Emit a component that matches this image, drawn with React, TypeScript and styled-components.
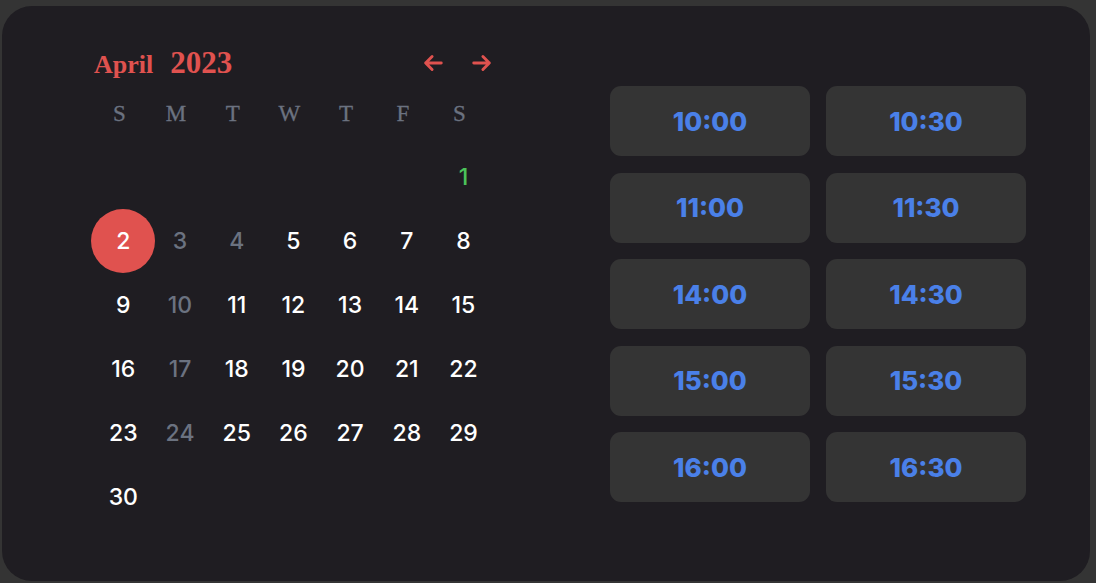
import React from "react";
import styled, { createGlobalStyle } from "styled-components";

const Global = createGlobalStyle`
  html, body { margin: 0; padding: 0; background: #343434; }
  body { padding: 6px 0 0 2px; }
  * { box-sizing: border-box; }
`;

const Card = styled.div`
  width: 1088px;
  height: 575px;
  background: #1f1d22;
  border-radius: 30px;
  display: flex;
  align-items: flex-start;
  padding: 37px 0 0 89px;
`;

const Calendar = styled.section`
  width: 402px;
  display: flex;
  flex-direction: column;
`;

const Header = styled.div`
  height: 40px;
  display: flex;
  align-items: center;
  justify-content: space-between;
`;

const Title = styled.div`
  display: flex;
  align-items: baseline;
  gap: 17px;
  font-family: "Liberation Serif", "Times New Roman", serif;
  font-weight: 700;
  color: #e0524f;
  padding-left: 3px;
`;

const Month = styled.span`
  font-size: 26px;
  font-weight: 700;
`;

const Year = styled.span`
  font-size: 31px;
  font-weight: 700;
`;

const Nav = styled.div`
  display: flex;
  gap: 27px;
  align-items: center;
`;

const NavButton = styled.button`
  background: none;
  border: none;
  padding: 0;
  width: 22px;
  height: 22px;
  display: flex;
  align-items: center;
  justify-content: center;
  color: #e0524f;
  cursor: pointer;
`;

const Weekdays = styled.div`
  margin-top: 11px;
  display: grid;
  grid-template-columns: repeat(7, 56.7px);
  height: 40px;
  align-items: center;
`;

const Weekday = styled.div`
  text-align: center;
  font-family: "Liberation Serif", "Times New Roman", serif;
  font-size: 23px;
  color: #6b7280;
  -webkit-text-stroke: 0.3px #6b7280;
`;

const Days = styled.div`
  margin-top: 11px;
  margin-left: 4px;
  display: grid;
  grid-template-columns: repeat(7, 56.7px);
  grid-auto-rows: 64px;
`;

const DayCell = styled.div`
  display: flex;
  align-items: center;
  justify-content: center;
`;

type Tone = "normal" | "muted" | "today" | "selected";

const toneColor: Record<Tone, string> = {
  normal: "#ffffff",
  muted: "#6b7280",
  today: "#4cc35a",
  selected: "#ffffff",
};

const Day = styled.div<{ $tone: Tone }>`
  flex: 0 0 auto;
  width: 64px;
  height: 64px;
  border-radius: 50%;
  display: flex;
  align-items: center;
  justify-content: center;
  font-family: Inter, "Noto Sans", sans-serif;
  font-size: 23px;
  font-weight: 500;
  color: ${(p) => toneColor[p.$tone]};
  background: ${(p) => (p.$tone === "selected" ? "#e0524f" : "transparent")};
`;

const Times = styled.div`
  margin-left: 117px;
  margin-top: 43px;
  display: grid;
  grid-template-columns: repeat(2, 200px);
  grid-auto-rows: 70px;
  column-gap: 16px;
  row-gap: 16.5px;
`;

const Slot = styled.button`
  border: none;
  border-radius: 11px;
  background: #343434;
  color: #4a80e8;
  font-family: Inter, "Noto Sans", sans-serif;
  font-weight: 800;
  font-size: 26px;
  display: flex;
  align-items: center;
  justify-content: center;
  cursor: pointer;
`;

const ArrowLeft = () => (
  <svg width="22" height="22" viewBox="0 0 24 24" fill="none" stroke="currentColor" strokeWidth="3.2" strokeLinecap="round" strokeLinejoin="round">
    <path d="M11 19l-7-7 7-7M4 12h17" />
  </svg>
);

const ArrowRight = () => (
  <svg width="22" height="22" viewBox="0 0 24 24" fill="none" stroke="currentColor" strokeWidth="3.2" strokeLinecap="round" strokeLinejoin="round">
    <path d="M13 5l7 7-7 7M20 12H3" />
  </svg>
);

const weekdays = ["S", "M", "T", "W", "T", "F", "S"];
const muted = new Set([3, 4, 10, 17, 24]);
const times = ["10:00", "10:30", "11:00", "11:30", "14:00", "14:30", "15:00", "15:30", "16:00", "16:30"];

export default function App() {
  const cells: (number | null)[] = [null, null, null, null, null, null];
  for (let d = 1; d <= 30; d++) cells.push(d);

  const toneOf = (d: number): Tone =>
    d === 2 ? "selected" : d === 1 ? "today" : muted.has(d) ? "muted" : "normal";

  return (
    <>
      <Global />
      <Card>
        <Calendar>
          <Header>
            <Title>
              <Month>April</Month>
              <Year>2023</Year>
            </Title>
            <Nav>
              <NavButton aria-label="Previous month"><ArrowLeft /></NavButton>
              <NavButton aria-label="Next month"><ArrowRight /></NavButton>
            </Nav>
          </Header>
          <Weekdays>
            {weekdays.map((w, i) => (
              <Weekday key={i}>{w}</Weekday>
            ))}
          </Weekdays>
          <Days>
            {cells.map((d, i) => (
              <DayCell key={i}>
                {d !== null && <Day $tone={toneOf(d)}>{d}</Day>}
              </DayCell>
            ))}
          </Days>
        </Calendar>
        <Times>
          {times.map((t) => (
            <Slot key={t}>{t}</Slot>
          ))}
        </Times>
      </Card>
    </>
  );
}
